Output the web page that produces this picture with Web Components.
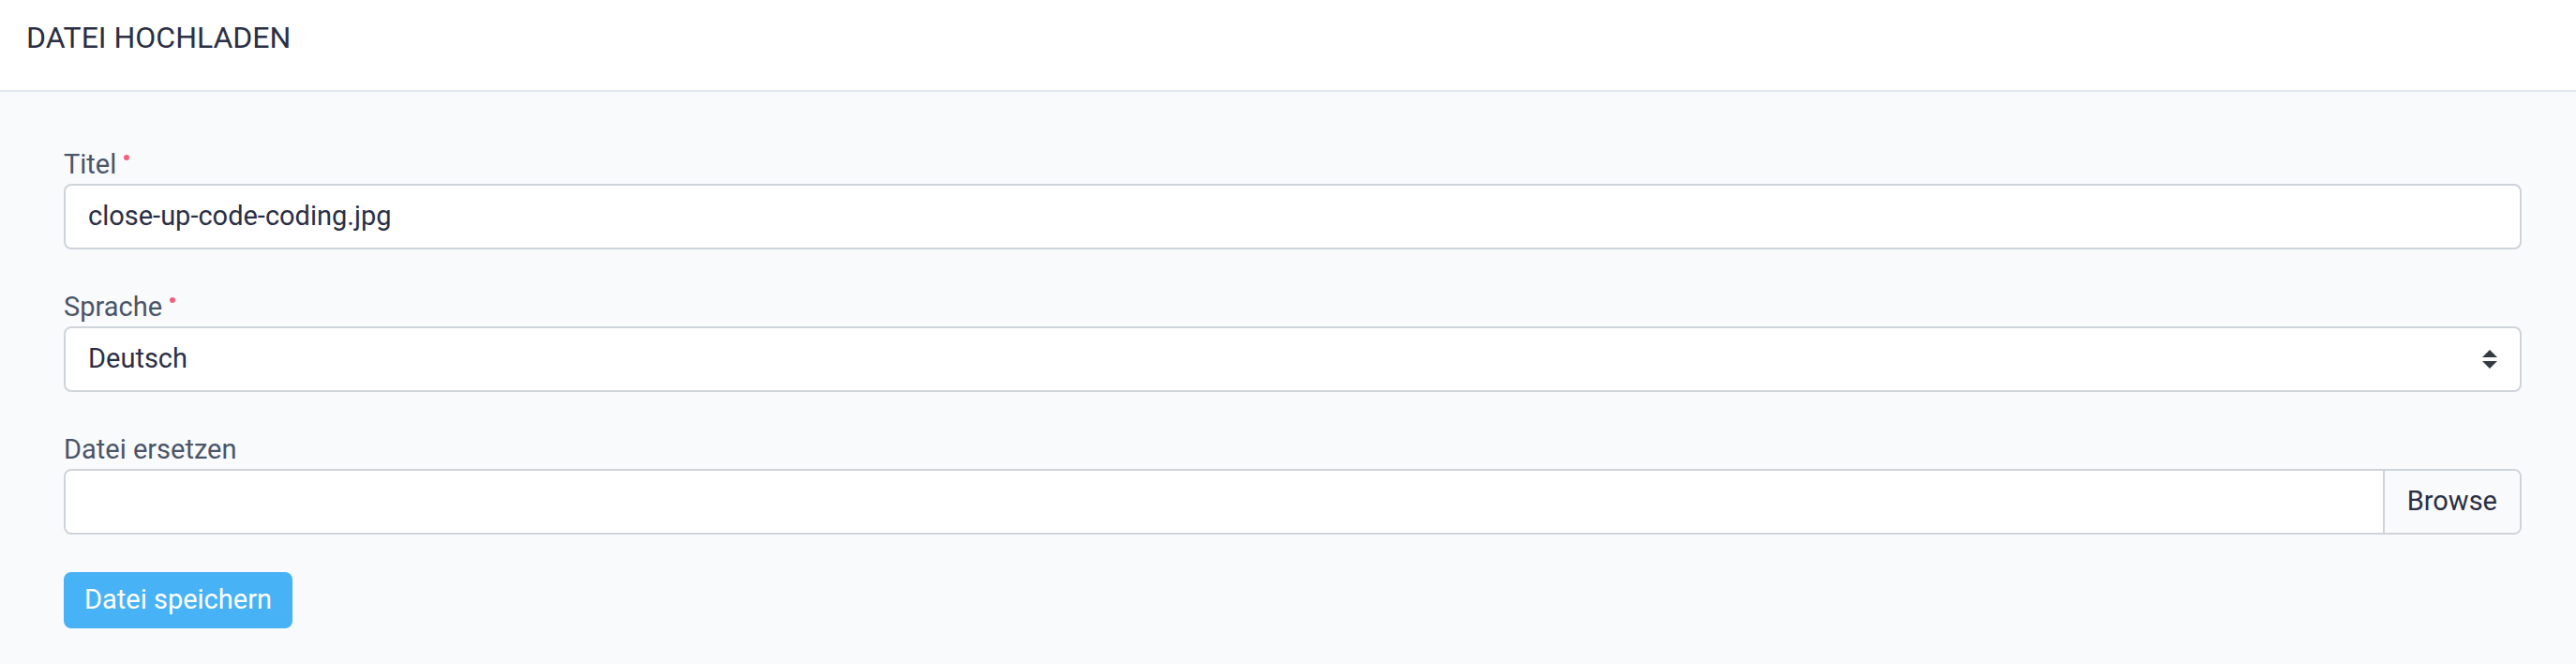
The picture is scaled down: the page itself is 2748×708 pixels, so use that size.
<!DOCTYPE html>
<html lang="de">
<head>
<meta charset="utf-8">
<title>Datei hochladen</title>
<style>
  html { background: #f9fafc; }
  body {
    margin: 0;
    font-family: Roboto, "Noto Sans", sans-serif;
    font-size: 29px;
    line-height: 42px;
    color: #2b2f45;
    --line: #ced4da;
    --label: #4a5568;
    --surface: #f9fafc;
  }
</style>
</head>
<body>
<upload-page></upload-page>

<template id="page-header">
  <style>
    :host { display: block; background: #fff; border-bottom: 2px solid #e2e8f0; padding: 16px 28px 32px; }
    h1 { margin: 0; font-size: 32px; line-height: 48px; font-weight: 400; text-transform: uppercase; }
  </style>
  <h1><slot></slot></h1>
</template>

<template id="required-mark">
  <style>
    :host { display: inline-block; width: 6px; height: 6px; border-radius: 50%; background: #f5607f; vertical-align: 14px; margin-left: 8px; }
  </style>
</template>

<template id="text-field">
  <style>
    :host { display: block; }
    label { display: block; color: var(--label); }
    input {
      display: block; box-sizing: border-box; width: 100%; height: 70px; margin: 0; padding: 0 24px 2px;
      border: 2px solid var(--line); border-radius: 8px; background: #fff; color: inherit; font: inherit; outline: none;
    }
    input:focus-visible { border-color: #48b2f7; }
  </style>
  <label for="control"><slot></slot></label>
  <input id="control" type="text" required>
</template>

<template id="select-field">
  <style>
    :host { display: block; }
    label { display: block; color: var(--label); }
    .wrap { display: grid; align-items: center; }
    select, svg { grid-area: 1 / 1; }
    select {
      box-sizing: border-box; width: 100%; height: 70px; margin: 0; padding: 0 60px 2px 24px; appearance: none;
      border: 2px solid var(--line); border-radius: 8px; background: #fff; color: inherit; font: inherit; outline: none;
    }
    select:focus-visible { border-color: #48b2f7; }
    svg { justify-self: end; margin-right: 26px; width: 16px; height: 20px; fill: #343a40; pointer-events: none; }
  </style>
  <label for="control"><slot></slot></label>
  <div class="wrap">
    <select id="control" required><option>Deutsch</option><option>Englisch</option></select>
    <svg viewBox="0 0 4 5" aria-hidden="true"><path d="M2 0 0 2h4zm0 5L0 3h4z"/></svg>
  </div>
</template>

<template id="file-field">
  <style>
    :host { display: block; }
    .caption { display: block; color: var(--label); }
    .box {
      position: relative; display: flex; justify-content: flex-end; box-sizing: border-box; height: 70px; overflow: hidden;
      border: 2px solid var(--line); border-radius: 8px; background: #fff;
    }
    .name { flex: 1; min-width: 0; padding: 11px 24px 13px; overflow: hidden; white-space: nowrap; }
    .browse { padding: 11px 24px 13px; border-left: 2px solid var(--line); background: var(--surface); }
    input { position: absolute; inset: 0; width: 100%; height: 100%; margin: 0; opacity: 0; cursor: pointer; }
    .box:focus-within { border-color: #48b2f7; }
  </style>
  <label class="caption" for="control"><slot></slot></label>
  <div class="box">
    <span class="name"></span>
    <label class="browse" for="control">Browse</label>
    <input id="control" type="file">
  </div>
</template>

<template id="save-button">
  <style>
    :host { display: block; }
    button {
      display: block; height: 60px; margin: 0; padding: 0 22px 2px; border: 0; border-radius: 8px;
      background: #48b2f7; color: #fff; font: inherit; cursor: pointer;
    }
  </style>
  <button type="submit"><slot></slot></button>
</template>

<template id="upload-page">
  <style>
    :host { display: block; }
    form { display: flex; flex-direction: column; gap: 40px; padding: 56px 58px 38px 68px; }
  </style>
  <page-header>Datei hochladen</page-header>
  <form>
    <text-field value="close-up-code-coding.jpg">Titel<required-mark></required-mark></text-field>
    <select-field>Sprache<required-mark></required-mark></select-field>
    <file-field>Datei ersetzen</file-field>
    <save-button>Datei speichern</save-button>
  </form>
</template>

<script>
  class TemplateElement extends HTMLElement {
    constructor() {
      super();
      const template = document.getElementById(this.localName);
      this.attachShadow({ mode: "open" }).append(document.importNode(template.content, true));
    }
  }

  class PageHeader extends TemplateElement {}
  class RequiredMark extends TemplateElement {}
  class SelectField extends TemplateElement {}

  class TextField extends TemplateElement {
    connectedCallback() {
      this.shadowRoot.querySelector("input").value = this.getAttribute("value") || "";
    }
  }

  class FileField extends TemplateElement {
    connectedCallback() {
      const input = this.shadowRoot.querySelector("input");
      input.addEventListener("change", () => {
        this.shadowRoot.querySelector(".name").textContent = input.files.length ? input.files[0].name : "";
      });
    }
  }

  class SaveButton extends TemplateElement {
    connectedCallback() {
      this.shadowRoot.querySelector("button").addEventListener("click", () => {
        const form = this.closest("form");
        if (form) form.requestSubmit();
      });
    }
  }

  class UploadPage extends TemplateElement {
    connectedCallback() {
      this.shadowRoot.querySelector("form").addEventListener("submit", event => event.preventDefault());
    }
  }

  customElements.define("page-header", PageHeader);
  customElements.define("required-mark", RequiredMark);
  customElements.define("text-field", TextField);
  customElements.define("select-field", SelectField);
  customElements.define("file-field", FileField);
  customElements.define("save-button", SaveButton);
  customElements.define("upload-page", UploadPage);
</script>
</body>
</html>
